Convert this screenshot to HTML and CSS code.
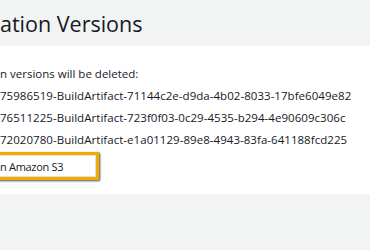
FILE: index.html
```html
<!DOCTYPE html>
<html lang="en">
<head>
    <meta charset="UTF-8">
    <meta name="viewport" content="width=device-width, initial-scale=1.0">
    <title>Delete Application Versions</title>
    <link rel="stylesheet" href="styles.css">
</head>
<body>

    <div class="header">
        <h1>ation Versions</h1>
    </div>

    <div class="panel">
        <p class="intro">n versions will be deleted:</p>
        <ul class="versions">
            <li>75986519-BuildArtifact-71144c2e-d9da-4b02-8033-17bfe6049e82</li>
            <li>76511225-BuildArtifact-723f0f03-0c29-4535-b294-4e90609c306c</li>
            <li>72020780-BuildArtifact-e1a01129-89e8-4943-83fa-641188fcd225</li>
        </ul>
        <div class="highlight">n Amazon S3</div>
    </div>

</body>
</html>
```

FILE: styles.css
```css
body {
    font-family: 'Open Sans', sans-serif;
    background-color: #f2f3f3;
    color: #16191f;
    margin: 0;
    overflow: hidden;
}
.header {
    height: 46px;
    padding-top: 11px;
    box-sizing: border-box;
}
h1 {
    margin: 0;
    font-size: 21.5px;
    font-weight: normal;
    line-height: 26px;
    white-space: nowrap;
}
.panel {
    background-color: white;
    height: 148px;
    padding-top: 18px;
    box-sizing: border-box;
    box-shadow: 0 2px 0 #c9cccc;
    font-size: 11.5px;
}
.intro {
    margin: 0;
    line-height: 20px;
}
.versions {
    list-style: none;
    margin: 1px 0 0;
    padding: 0;
    line-height: 22px;
    white-space: nowrap;
    letter-spacing: 0.04px;
}
.highlight {
    width: 96px;
    margin: 1px 0 0 -10px;
    padding: 2px 0 0 7px;
    height: 20px;
    line-height: 20px;
    font-size: 11px;
    letter-spacing: -0.3px;
    border: 3px solid #f0ab00;
    box-shadow: 1px 1px 2px rgba(0, 0, 0, 0.7), inset 0 0 0 1px rgba(0, 0, 0, 0.12);
}
```
